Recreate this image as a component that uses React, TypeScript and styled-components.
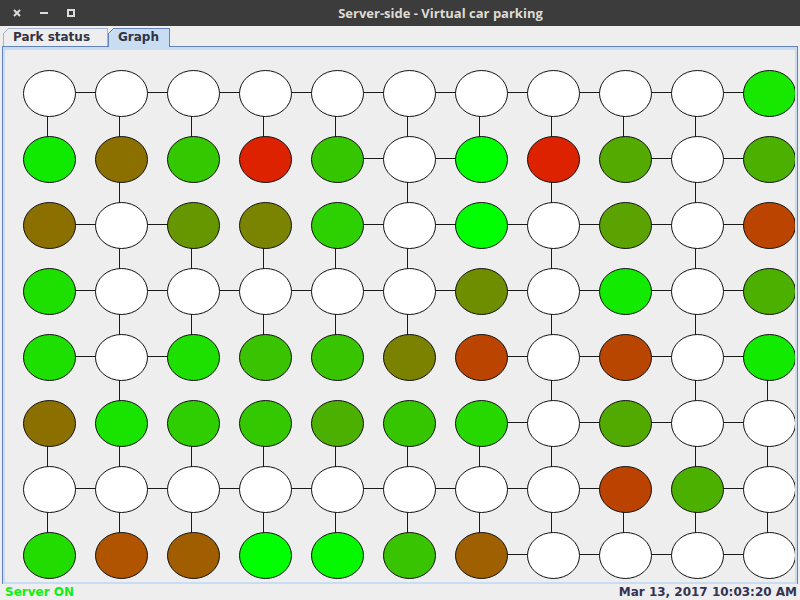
import React from "react";
import styled, { createGlobalStyle } from "styled-components";

const GlobalStyle = createGlobalStyle`
  html, body {
    margin: 0;
    padding: 0;
    background: #eeeeee;
    font-family: "DejaVu Sans", "Liberation Sans", sans-serif;
  }
`;

const W = "#ffffff";

const NODE_COLORS: string[][] = [
  [W, W, W, W, W, W, W, W, W, W, "#17e800"],
  ["#10ea00", "#8b7000", "#33c800", "#dd2200", "#36c600", W, "#00ff00", "#dd2200", "#55aa00", W, "#4bb000"],
  ["#8b7000", W, "#669600", "#7a8400", "#2dd000", W, "#00ff00", W, "#5aa300", W, "#bb4400"],
  ["#1ee000", W, W, W, W, W, "#6e8e00", W, "#12ea00", W, "#4bb000"],
  ["#1ee000", W, "#1ee000", "#3ac300", "#39c400", "#7b8200", "#bb4400", W, "#b84600", W, "#12ea00"],
  ["#8b7000", "#19e400", "#2ece00", "#34c800", "#4bb000", "#36c600", "#26d800", W, "#52aa00", W, W],
  [W, W, W, W, W, W, W, W, "#bc4200", "#4cb000", W],
  ["#22dc00", "#b05400", "#a05e00", "#00ff00", "#06f800", "#38c400", "#9e6000", W, W, W, W],
];

// horizontal links: per row, link between column c and c+1
const H_LINKS = [
  "1111111111",
  "0000110011",
  "1100111111",
  "1111111111",
  "1100001111",
  "0000001111",
  "1111111101",
  "0000001111",
];

// vertical links: per row gap r/r+1, per column
const V_LINKS = [
  "11111111110",
  "01000101010",
  "01111101010",
  "01111101010",
  "01000001011",
  "11111111011",
  "11111111111",
];

const NODE_W = 52;
const NODE_H = 46;
const PITCH_X = 72;
const PITCH_Y = 66;
const ORIGIN_X = 18;
const ORIGIN_Y = 20;

const Window = styled.div`
  width: 800px;
  height: 600px;
  display: flex;
  flex-direction: column;
  background: #eeeeee;
  overflow: hidden;
`;

const TitleBar = styled.div`
  height: 26px;
  flex: none;
  background: #3c3c3c;
  display: flex;
  align-items: center;
`;

const Controls = styled.div`
  width: 80px;
  display: flex;
  align-items: center;
  gap: 19px;
  padding-left: 13px;
  box-sizing: border-box;
`;

const ControlIcon = styled.svg`
  display: block;
  width: 8px;
  height: 8px;
  color: #dcdcdc;
`;

const Title = styled.div`
  flex: 1;
  text-align: center;
  color: #dfdbd2;
  font-family: "Open Sans", "DejaVu Sans", sans-serif;
  font-weight: 700;
  font-size: 13px;
  line-height: 26px;
  padding-left: 1px;
`;

const TabStrip = styled.div`
  height: 20px;
  flex: none;
  display: flex;
  align-items: flex-end;
  padding-left: 3px;
  position: relative;
  z-index: 1;
`;

const Tab = styled.div<{ $selected?: boolean; $w: number }>`
  position: relative;
  box-sizing: border-box;
  width: ${(p) => p.$w}px;
  height: ${(p) => (p.$selected ? 19 : 18)}px;
  margin-bottom: ${(p) => (p.$selected ? -1 : 0)}px;
  padding-left: 9px;
  border: 1px solid ${(p) => (p.$selected ? "#6382bf" : "#a3b4d2")};
  border-bottom: none;
  background: ${(p) => (p.$selected ? "#c8ddf2" : "#eeeeee")};
  color: #333344;
  font-family: "DejaVu Sans", sans-serif;
  font-weight: 700;
  font-size: 12px;
  line-height: 16px;
  white-space: nowrap;

  &::before {
    content: "";
    position: absolute;
    top: -1px;
    left: -1px;
    width: 6px;
    height: 6px;
    background: linear-gradient(
      135deg,
      #eeeeee 0 calc(50% - 0.7px),
      ${(p) => (p.$selected ? "#6382bf" : "#a3b4d2")} calc(50% - 0.7px) calc(50% + 0.7px),
      transparent calc(50% + 0.7px)
    );
  }
`;

const Panel = styled.div`
  flex: 1;
  margin: 0 2px;
  border: 1px solid #6382bf;
  border-bottom: none;
  padding: 3px 2px 2px 2px;
  background: #c8ddf2;
  display: flex;
  min-height: 0;
`;

const Canvas = styled.div`
  flex: 1;
  background: #eeeeee;
  overflow: hidden;
`;

const GraphSvg = styled.svg`
  display: block;
  width: 790px;
  height: 532px;
`;

const StatusBar = styled.div`
  height: 16px;
  flex: none;
  display: flex;
  align-items: center;
  justify-content: space-between;
  padding: 0 3px 0 5px;
  font-family: "DejaVu Sans", sans-serif;
  font-weight: 700;
  font-size: 12px;
`;

const ServerState = styled.span`
  color: #11ee11;
`;

const Clock = styled.span`
  color: #333355;
`;

function ParkingGraph() {
  const links: React.ReactNode[] = [];
  H_LINKS.forEach((row, r) => {
    row.split("").forEach((b, c) => {
      if (b !== "1") return;
      const x0 = ORIGIN_X + PITCH_X * c;
      const y = ORIGIN_Y + PITCH_Y * r + 22.5;
      links.push(
        <line key={`h-${r}-${c}`} x1={x0 + 26} y1={y} x2={x0 + PITCH_X + 26} y2={y} />
      );
    });
  });
  V_LINKS.forEach((row, r) => {
    row.split("").forEach((b, c) => {
      if (b !== "1") return;
      const x = ORIGIN_X + PITCH_X * c + 24.5;
      const y0 = ORIGIN_Y + PITCH_Y * r;
      links.push(
        <line key={`v-${r}-${c}`} x1={x} y1={y0 + 23} x2={x} y2={y0 + PITCH_Y + 23} />
      );
    });
  });

  const nodes: React.ReactNode[] = [];
  NODE_COLORS.forEach((row, r) => {
    row.forEach((color, c) => {
      const x0 = ORIGIN_X + PITCH_X * c;
      const y0 = ORIGIN_Y + PITCH_Y * r;
      nodes.push(
        <ellipse
          key={`n-${r}-${c}`}
          cx={x0 + NODE_W / 2 + 0.5}
          cy={y0 + NODE_H / 2 + 0.5}
          rx={NODE_W / 2}
          ry={NODE_H / 2}
          fill={color}
        />
      );
    });
  });

  return (
    <GraphSvg viewBox="0 0 790 532">
      <g stroke="#1a1a1a" strokeWidth={1}>{links}</g>
      <g stroke="#111111" strokeWidth={1}>{nodes}</g>
    </GraphSvg>
  );
}

export default function App() {
  return (
    <>
      <GlobalStyle />
      <Window>
        <TitleBar>
          <Controls>
            <ControlIcon viewBox="0 0 8 8">
              <path d="M1 1 L7 7 M7 1 L1 7" stroke="currentColor" strokeWidth={2} />
            </ControlIcon>
            <ControlIcon viewBox="0 0 8 8">
              <path d="M0 4 L8 4" stroke="currentColor" strokeWidth={2} />
            </ControlIcon>
            <ControlIcon viewBox="0 0 8 8">
              <rect x={1} y={1} width={6} height={6} fill="none" stroke="currentColor" strokeWidth={2} />
            </ControlIcon>
          </Controls>
          <Title>Server-side - Virtual car parking</Title>
        </TitleBar>
        <TabStrip>
          <Tab $w={105}>Park status</Tab>
          <Tab $w={62} $selected>
            Graph
          </Tab>
        </TabStrip>
        <Panel>
          <Canvas>
            <ParkingGraph />
          </Canvas>
        </Panel>
        <StatusBar>
          <ServerState>Server ON</ServerState>
          <Clock>Mar 13, 2017 10:03:20 AM</Clock>
        </StatusBar>
      </Window>
    </>
  );
}
